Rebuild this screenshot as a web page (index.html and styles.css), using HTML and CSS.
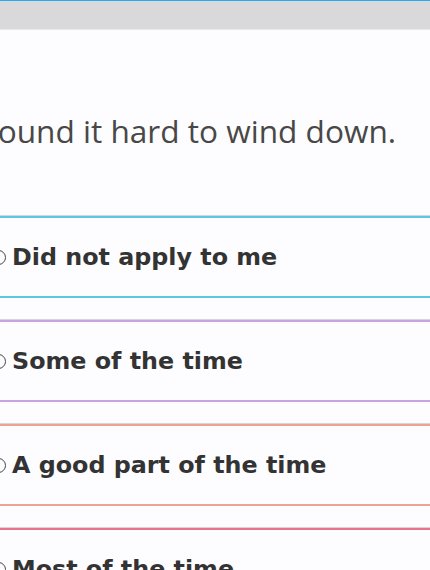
FILE: index.html
```html
<!DOCTYPE html>
<html lang="en">
<head>
<meta charset="utf-8">
<title>Question</title>
<link rel="stylesheet" href="styles.css">
</head>
<body>
<header class="topbar"></header>
<main class="content">
  <p class="question">I found it hard to wind down.</p>
  <ul class="options">
    <li class="option option-blue"><span class="radio"></span><span class="label">Did not apply to me</span></li>
    <li class="option option-purple"><span class="radio"></span><span class="label">Some of the time</span></li>
    <li class="option option-salmon"><span class="radio"></span><span class="label">A good part of the time</span></li>
    <li class="option option-red"><span class="radio"></span><span class="label">Most of the time</span></li>
  </ul>
</main>
</body>
</html>
```

FILE: styles.css
```css
html, body {
  margin: 0;
  padding: 0;
}
body {
  width: 430px;
  height: 570px;
  overflow: hidden;
  background: #fdfcfe;
  font-family: "Open Sans", "Noto Sans", sans-serif;
}
.topbar {
  height: 28px;
  background: #d9d8da;
  border-top: 1px solid #29a9f2;
  border-bottom: 1px solid #e9e8eb;
}
.content {
  margin-left: -30px;
  width: 520px;
}
.question {
  margin: 0;
  padding-top: 81px;
  height: 100px;
  font-size: 31.6px;
  line-height: 40px;
  color: #484848;
  white-space: nowrap;
  box-sizing: border-box;
}
.options {
  list-style: none;
  margin: 0;
  padding: 86px 0 0;
  display: flex;
  flex-direction: column;
  gap: 22px;
}
.option {
  height: 78px;
  display: flex;
  align-items: center;
  gap: 6px;
  padding-left: 21px;
  border-top: 2px solid;
  border-bottom: 2px solid;
  box-shadow: 0 -1px 0 #d6d6d8;
}
.option-blue { border-color: #5cc6e4; }
.option-purple { border-color: #c9a3e2; }
.option-salmon { border-color: #f0a393; }
.option-red { border-color: #e9738d; }
.radio {
  width: 13px;
  height: 13px;
  border: 1.5px solid #444;
  border-radius: 50%;
  flex: none;
}
.label {
  font-family: "DejaVu Sans", sans-serif;
  font-size: 23.8px;
  font-weight: 700;
  color: #333;
  white-space: nowrap;
}
```
